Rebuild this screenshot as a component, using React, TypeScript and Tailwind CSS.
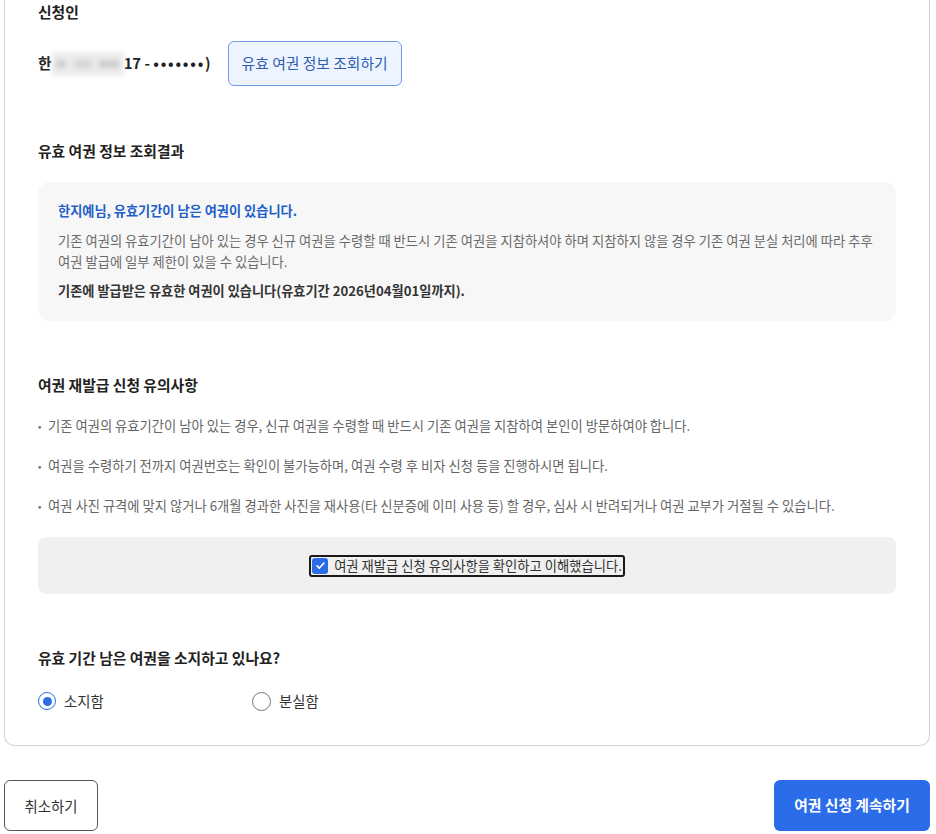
import React from "react";

const font = { fontFamily: '"Noto Sans CJK KR", "Noto Sans", sans-serif' };

const notices = [
  "기존 여권의 유효기간이 남아 있는 경우, 신규 여권을 수령할 때 반드시 기존 여권을 지참하여 본인이 방문하여야 합니다.",
  "여권을 수령하기 전까지 여권번호는 확인이 불가능하며, 여권 수령 후 비자 신청 등을 진행하시면 됩니다.",
  "여권 사진 규격에 맞지 않거나 6개월 경과한 사진을 재사용(타 신분증에 이미 사용 등) 할 경우, 심사 시 반려되거나 여권 교부가 거절될 수 있습니다.",
];

function Radio({ checked, label }: { checked: boolean; label: string }) {
  return (
    <div className="flex items-center gap-[8px] w-[214px] h-[20px]">
      {checked ? (
        <span className="w-[18px] h-[18px] rounded-full border-[1.5px] border-[#2b6de8] flex items-center justify-center">
          <span className="w-[9px] h-[9px] rounded-full bg-[#2b6de8]" />
        </span>
      ) : (
        <span className="w-[19px] h-[19px] rounded-full border-[1.5px] border-[#777]" />
      )}
      <span className="text-[14.4px] text-[#333]">{label}</span>
    </div>
  );
}

export default function App() {
  return (
    <div className="bg-white min-h-[834px] pl-[4px]" style={font}>
      <div className="w-[926px] border-x border-b border-[#d2d2d2] rounded-b-[10px] px-[33px] pt-[2px] pb-[34px]">
        <div className="text-[14.8px] leading-[20px] font-bold text-[#222]">신청인</div>

        <div className="mt-[19px] flex items-center gap-[17px]">
          <div className="text-[14.8px] font-bold text-[#222] flex items-center">
            <span>한</span>
            {/* masked personal info */}
            <span className="inline-flex items-center justify-around w-[72px] h-[24px] bg-[#ebebeb] blur-[2px]">
              <span className="w-[10px] h-[8px] bg-[#d2d2d2]" />
              <span className="w-[16px] h-[8px] bg-[#d6d6d6]" />
              <span className="w-[20px] h-[8px] bg-[#d0d0d0]" />
            </span>
            <span>17 - <span className="tracking-[1.8px]">•••••••</span>)</span>
          </div>
          <button className="h-[45px] w-[174px] rounded-[6px] border border-[#6f9ce8] bg-[#eef4ff] text-[14.8px] text-[#2d5cb0]">
            유효 여권 정보 조회하기
          </button>
        </div>

        <div className="mt-[55px] text-[14.8px] leading-[20px] font-bold text-[#222]">유효 여권 정보 조회결과</div>

        <div className="mt-[21px] bg-[#f7f7f7] rounded-[12px] px-[20px] pt-[19px] pb-[20px]">
          <div className="text-[13.2px] leading-[20px] font-bold text-[#1f5fc9]">
            한지예님, 유효기간이 남은 여권이 있습니다.
          </div>
          <p className="mt-[9px] text-[13.3px] leading-[21px] text-[#6b6b6b]">
            기존 여권의 유효기간이 남아 있는 경우 신규 여권을 수령할 때 반드시 기존 여권을 지참하셔야 하며 지참하지 않을 경우 기존 여권 분실 처리에 따라 추후 여권 발급에 일부 제한이 있을 수 있습니다.
          </p>
          <div className="mt-[9px] text-[13.2px] leading-[20px] font-bold text-[#333]">
            기존에 발급받은 유효한 여권이 있습니다(유효기간 2026년04월01일까지).
          </div>
        </div>

        <div className="mt-[54px] text-[14.8px] leading-[20px] font-bold text-[#222]">여권 재발급 신청 유의사항</div>

        <ul className="mt-[21px] flex flex-col gap-[20px]">
          {notices.map((n) => (
            <li key={n} className="flex text-[13.3px] leading-[20px] text-[#666]">
              <span className="w-[10px] shrink-0 text-[10px]">•</span>
              <span>{n}</span>
            </li>
          ))}
        </ul>

        <div className="mt-[21px] h-[57px] bg-[#f0f0f0] rounded-[8px] flex items-center justify-center">
          <label className="flex items-center gap-[6px] h-[22px] pl-[1px] pr-[1px] border-2 border-[#1a1a1a] rounded-[3px]">
            <span className="w-[16px] h-[16px] rounded-[3px] bg-[#2b6de8] flex items-center justify-center">
              <svg width="11" height="11" viewBox="0 0 12 12" fill="none">
                <path d="M2.2 6.3 4.8 8.8 9.8 3.3" stroke="white" strokeWidth="1.8" strokeLinecap="round" strokeLinejoin="round" />
              </svg>
            </span>
            <span className="text-[13.3px] text-[#333]">여권 재발급 신청 유의사항을 확인하고 이해했습니다.</span>
          </label>
        </div>

        <div className="mt-[54px] text-[14.8px] leading-[20px] font-bold text-[#222]">유효 기간 남은 여권을 소지하고 있나요?</div>

        <div className="mt-[23px] flex">
          <Radio checked label="소지함" />
          <Radio checked={false} label="분실함" />
        </div>
      </div>

      <div className="mt-[34px] w-[926px] flex justify-between">
        <button className="h-[51px] w-[94px] rounded-[6px] border border-[#555] bg-white text-[14.4px] text-[#333]">
          취소하기
        </button>
        <button className="h-[51px] w-[156px] rounded-[6px] bg-[#2b6de8] text-[14.8px] font-bold text-white">
          여권 신청 계속하기
        </button>
      </div>
    </div>
  );
}
